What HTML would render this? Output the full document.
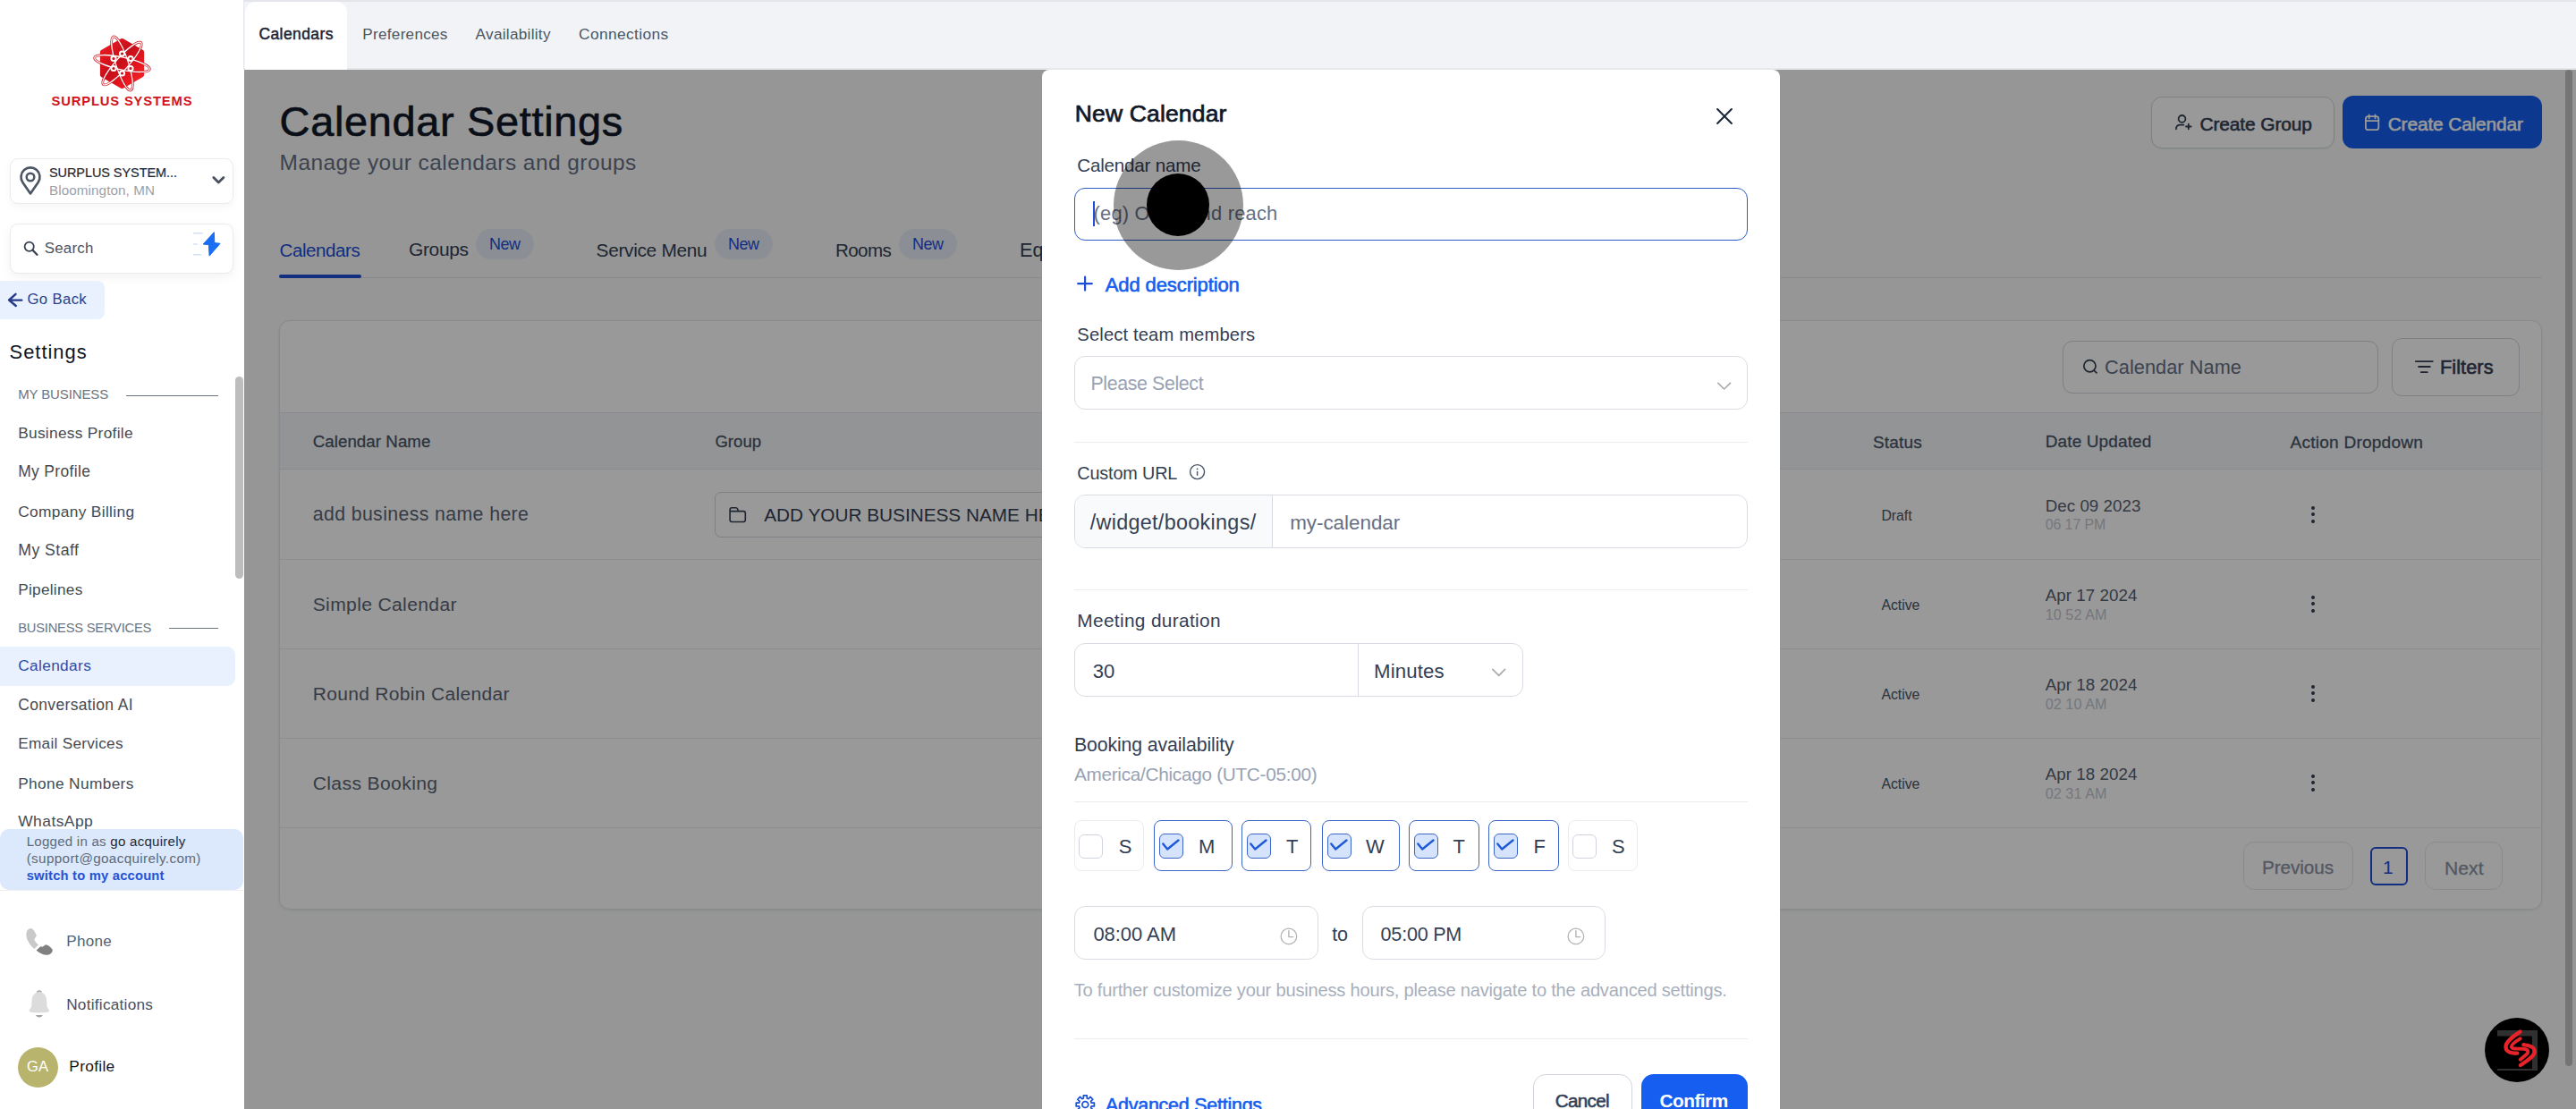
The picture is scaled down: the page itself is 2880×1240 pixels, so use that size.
<!DOCTYPE html>
<html><head><meta charset="utf-8"><style>
html,body{margin:0;padding:0;}
body{width:2880px;height:1240px;overflow:hidden;position:relative;background:#fff;font-family:"Liberation Sans",sans-serif;}
.t{position:absolute;line-height:1;white-space:nowrap;}
.b{position:absolute;}
</style></head><body>
<div class="b" style="left:0px;top:0px;width:272px;height:1240px;z-index:1;background:#fff;"></div>
<div class="b" style="left:272px;top:0px;width:1px;height:78px;z-index:2;background:#e4e7ec;"></div>
<!--LOGO-->
<div class="b" style="left:11px;top:177px;width:250px;height:51px;z-index:1;border:1px solid #e9ebef;border-radius:9px;background:#fff;box-shadow:0 4px 10px rgba(16,24,40,0.04);box-sizing:border-box;"></div>
<div class="b" style="left:11px;top:250px;width:250px;height:56px;z-index:1;border:1px solid #e9ebef;border-radius:9px;background:#fff;box-shadow:0 4px 12px rgba(16,24,40,0.05);box-sizing:border-box;"></div>
<div class="b" style="left:0px;top:314px;width:117px;height:43px;z-index:1;background:#e8f1fd;border-radius:0 8px 8px 0;"></div>
<div class="b" style="left:141px;top:442px;width:103px;height:1px;z-index:1;background:#6b7482;"></div>
<div class="b" style="left:189px;top:702px;width:55px;height:1px;z-index:1;background:#6b7482;"></div>
<div class="b" style="left:0px;top:723px;width:263px;height:44px;z-index:1;background:#e8f1fd;border-radius:0 9px 9px 0;"></div>
<div class="b" style="left:263px;top:421px;width:9px;height:226px;z-index:1;background:#bdbdbd;border-radius:5px;"></div>
<div class="b" style="left:0px;top:927px;width:272px;height:68px;z-index:3;background:#dce8fb;border-radius:10px;"></div>
<div class="b" style="left:0px;top:995px;width:272px;height:1px;z-index:1;background:#eceef1;"></div>
<div class="b" style="left:20px;top:1171px;width:45px;height:45px;z-index:1;background:#b8b46e;border-radius:50%;"></div>
<div class="b" style="left:273px;top:0px;width:2607px;height:78px;z-index:1;background:#f2f3f7;"></div>
<div class="b" style="left:273px;top:0px;width:2607px;height:2px;z-index:1;background:#e3e5ea;"></div>
<div class="b" style="left:273px;top:76px;width:2607px;height:2px;z-index:1;background:#e6e8ec;"></div>
<div class="b" style="left:274px;top:2px;width:114px;height:76px;z-index:1;background:#fff;border-radius:12px 12px 0 0;"></div>
<div class="b" style="left:273px;top:78px;width:2607px;height:1162px;z-index:1;background:#f8fbf9;"></div>
<div class="b" style="left:2405px;top:108px;width:205px;height:58px;z-index:1;border:1px solid #d0d5dd;border-radius:12px;background:#fff;box-sizing:border-box;box-shadow:0 1px 2px rgba(16,24,40,0.05);"></div>
<div class="b" style="left:2619px;top:107px;width:223px;height:59px;z-index:1;background:#155eef;border-radius:12px;"></div>
<div class="b" style="left:312px;top:307px;width:92px;height:4px;z-index:2;background:#1d4ed8;border-radius:2px;"></div>
<div class="b" style="left:312px;top:310px;width:2530px;height:1px;z-index:1;background:#e4e7ec;"></div>
<div class="b" style="left:532px;top:256px;width:65px;height:34px;z-index:1;background:#e8edf8;border-radius:17px;"></div>
<div class="b" style="left:799px;top:256px;width:65px;height:34px;z-index:1;background:#e8edf8;border-radius:17px;"></div>
<div class="b" style="left:1005px;top:256px;width:65px;height:34px;z-index:1;background:#e8edf8;border-radius:17px;"></div>
<div class="b" style="left:312px;top:358px;width:2530px;height:659px;z-index:1;background:#fff;border:1px solid #e4e7ec;border-radius:12px;box-sizing:border-box;box-shadow:0 1px 3px rgba(16,24,40,0.08);"></div>
<div class="b" style="left:313px;top:461px;width:2528px;height:64px;z-index:1;background:#f6f7f9;border-top:1px solid #e4e7ec;border-bottom:1px solid #e4e7ec;box-sizing:border-box;"></div>
<div class="b" style="left:2306px;top:381px;width:353px;height:59px;z-index:1;border:1px solid #d0d5dd;border-radius:11px;background:#fff;box-sizing:border-box;"></div>
<div class="b" style="left:2674px;top:378px;width:143px;height:65px;z-index:1;border:1px solid #d0d5dd;border-radius:11px;background:#fff;box-sizing:border-box;"></div>
<div class="b" style="left:313px;top:625px;width:2528px;height:1px;z-index:1;background:#e9ebef;"></div>
<div class="b" style="left:2584px;top:565.5px;width:4.199999999999818px;height:4.2000000000000455px;z-index:1;background:#344054;border-radius:50%;"></div>
<div class="b" style="left:2584px;top:573.0px;width:4.199999999999818px;height:4.2000000000000455px;z-index:1;background:#344054;border-radius:50%;"></div>
<div class="b" style="left:2584px;top:580.5px;width:4.199999999999818px;height:4.2000000000000455px;z-index:1;background:#344054;border-radius:50%;"></div>
<div class="b" style="left:313px;top:725px;width:2528px;height:1px;z-index:1;background:#e9ebef;"></div>
<div class="b" style="left:2584px;top:665.5px;width:4.199999999999818px;height:4.2000000000000455px;z-index:1;background:#344054;border-radius:50%;"></div>
<div class="b" style="left:2584px;top:673.0px;width:4.199999999999818px;height:4.2000000000000455px;z-index:1;background:#344054;border-radius:50%;"></div>
<div class="b" style="left:2584px;top:680.5px;width:4.199999999999818px;height:4.2000000000000455px;z-index:1;background:#344054;border-radius:50%;"></div>
<div class="b" style="left:313px;top:825px;width:2528px;height:1px;z-index:1;background:#e9ebef;"></div>
<div class="b" style="left:2584px;top:765.5px;width:4.199999999999818px;height:4.2000000000000455px;z-index:1;background:#344054;border-radius:50%;"></div>
<div class="b" style="left:2584px;top:773.0px;width:4.199999999999818px;height:4.2000000000000455px;z-index:1;background:#344054;border-radius:50%;"></div>
<div class="b" style="left:2584px;top:780.5px;width:4.199999999999818px;height:4.2000000000000455px;z-index:1;background:#344054;border-radius:50%;"></div>
<div class="b" style="left:313px;top:925px;width:2528px;height:1px;z-index:1;background:#e9ebef;"></div>
<div class="b" style="left:2584px;top:865.5px;width:4.199999999999818px;height:4.2000000000000455px;z-index:1;background:#344054;border-radius:50%;"></div>
<div class="b" style="left:2584px;top:873.0px;width:4.199999999999818px;height:4.2000000000000455px;z-index:1;background:#344054;border-radius:50%;"></div>
<div class="b" style="left:2584px;top:880.5px;width:4.199999999999818px;height:4.2000000000000455px;z-index:1;background:#344054;border-radius:50%;"></div>
<div class="b" style="left:799px;top:550px;width:401px;height:51px;z-index:1;border:1px solid #d0d5dd;border-radius:7px;background:#fff;box-sizing:border-box;"></div>
<div class="b" style="left:2508px;top:941px;width:123px;height:54px;z-index:1;border:1px solid #e4e7ec;border-radius:12px;background:#fff;box-sizing:border-box;"></div>
<div class="b" style="left:2650px;top:947px;width:42px;height:43px;z-index:1;border:2px solid #1d4ed8;border-radius:6px;box-sizing:border-box;"></div>
<div class="b" style="left:2711px;top:941px;width:87px;height:54px;z-index:1;border:1px solid #e4e7ec;border-radius:12px;background:#fff;box-sizing:border-box;"></div>
<div class="b" style="left:2868px;top:78px;width:8px;height:1114px;z-index:2;background:#c4c4c4;border-radius:4px;"></div>
<div class="b" style="left:273px;top:78px;width:2607px;height:1162px;z-index:10;background:rgba(0,0,0,0.4);"></div>
<div class="b" style="left:1165px;top:78px;width:825px;height:1182px;z-index:20;background:#fff;border-radius:8px 8px 0 0;"></div>
<div class="b" style="left:1201px;top:210px;width:753px;height:59px;z-index:21;border:1.5px solid #2d5cc8;border-radius:12px;box-sizing:border-box;"></div>
<div class="b" style="left:1222px;top:225px;width:2px;height:28px;z-index:22;background:#1d4ed8;"></div>
<div class="b" style="left:1201px;top:398px;width:753px;height:60px;z-index:21;border:1px solid #d9dde3;border-radius:12px;box-sizing:border-box;"></div>
<div class="b" style="left:1201px;top:494px;width:753px;height:1px;z-index:21;background:#eaecf0;"></div>
<div class="b" style="left:1201px;top:553px;width:753px;height:60px;z-index:21;border:1px solid #d9dde3;border-radius:12px;box-sizing:border-box;overflow:hidden;"><div style="position:absolute;left:0;top:0;width:220px;height:100%;background:#f9fafb;border-right:1px solid #d9dde3;"></div></div>
<div class="b" style="left:1201px;top:659px;width:753px;height:1px;z-index:21;background:#eaecf0;"></div>
<div class="b" style="left:1201px;top:719px;width:502px;height:60px;z-index:21;border:1px solid #d9dde3;border-radius:12px;box-sizing:border-box;"><div style="position:absolute;left:316px;top:0;width:1px;height:100%;background:#d9dde3;"></div></div>
<div class="b" style="left:1201px;top:896px;width:753px;height:1px;z-index:21;background:#eaecf0;"></div>
<div class="b" style="left:1201px;top:917px;width:78px;height:57px;z-index:21;border:1px solid #eaecf0;border-radius:8px;box-sizing:border-box;"></div>
<div class="b" style="left:1206px;top:933px;width:27px;height:27px;z-index:22;border:1px solid #d0d5dd;border-radius:6px;box-sizing:border-box;"></div>
<div class="b" style="left:1290px;top:917px;width:88px;height:57px;z-index:21;border:1.4px solid #3d66c8;border-radius:8px;box-sizing:border-box;"></div>
<div class="b" style="left:1296px;top:932px;width:27px;height:28px;z-index:22;border:1.4px solid #3d66c8;background:#d6e3fc;border-radius:6px;box-sizing:border-box;"></div>
<svg class="b" style="left:1296px;top:932px;z-index:23;overflow:visible" width="27" height="28" viewBox="0 0 27 28"><path d="M4.3 11.5 L9.2 17.5 L21.5 7.5" fill="none" stroke="#1f5ad6" stroke-width="2.4" stroke-linecap="round" stroke-linejoin="round"/></svg>
<div class="b" style="left:1388px;top:917px;width:78px;height:57px;z-index:21;border:1.4px solid #3d66c8;border-radius:8px;box-sizing:border-box;"></div>
<div class="b" style="left:1394px;top:932px;width:27px;height:28px;z-index:22;border:1.4px solid #3d66c8;background:#d6e3fc;border-radius:6px;box-sizing:border-box;"></div>
<svg class="b" style="left:1394px;top:932px;z-index:23;overflow:visible" width="27" height="28" viewBox="0 0 27 28"><path d="M4.3 11.5 L9.2 17.5 L21.5 7.5" fill="none" stroke="#1f5ad6" stroke-width="2.4" stroke-linecap="round" stroke-linejoin="round"/></svg>
<div class="b" style="left:1478px;top:917px;width:87px;height:57px;z-index:21;border:1.4px solid #3d66c8;border-radius:8px;box-sizing:border-box;"></div>
<div class="b" style="left:1484px;top:932px;width:27px;height:28px;z-index:22;border:1.4px solid #3d66c8;background:#d6e3fc;border-radius:6px;box-sizing:border-box;"></div>
<svg class="b" style="left:1484px;top:932px;z-index:23;overflow:visible" width="27" height="28" viewBox="0 0 27 28"><path d="M4.3 11.5 L9.2 17.5 L21.5 7.5" fill="none" stroke="#1f5ad6" stroke-width="2.4" stroke-linecap="round" stroke-linejoin="round"/></svg>
<div class="b" style="left:1575px;top:917px;width:79px;height:57px;z-index:21;border:1.4px solid #3d66c8;border-radius:8px;box-sizing:border-box;"></div>
<div class="b" style="left:1581px;top:932px;width:27px;height:28px;z-index:22;border:1.4px solid #3d66c8;background:#d6e3fc;border-radius:6px;box-sizing:border-box;"></div>
<svg class="b" style="left:1581px;top:932px;z-index:23;overflow:visible" width="27" height="28" viewBox="0 0 27 28"><path d="M4.3 11.5 L9.2 17.5 L21.5 7.5" fill="none" stroke="#1f5ad6" stroke-width="2.4" stroke-linecap="round" stroke-linejoin="round"/></svg>
<div class="b" style="left:1664px;top:917px;width:79px;height:57px;z-index:21;border:1.4px solid #3d66c8;border-radius:8px;box-sizing:border-box;"></div>
<div class="b" style="left:1670px;top:932px;width:27px;height:28px;z-index:22;border:1.4px solid #3d66c8;background:#d6e3fc;border-radius:6px;box-sizing:border-box;"></div>
<svg class="b" style="left:1670px;top:932px;z-index:23;overflow:visible" width="27" height="28" viewBox="0 0 27 28"><path d="M4.3 11.5 L9.2 17.5 L21.5 7.5" fill="none" stroke="#1f5ad6" stroke-width="2.4" stroke-linecap="round" stroke-linejoin="round"/></svg>
<div class="b" style="left:1753px;top:917px;width:78px;height:57px;z-index:21;border:1px solid #eaecf0;border-radius:8px;box-sizing:border-box;"></div>
<div class="b" style="left:1758px;top:933px;width:27px;height:27px;z-index:22;border:1px solid #d0d5dd;border-radius:6px;box-sizing:border-box;"></div>
<div class="b" style="left:1201px;top:1013px;width:273px;height:60px;z-index:21;border:1px solid #d9dde3;border-radius:12px;box-sizing:border-box;"></div>
<div class="b" style="left:1523px;top:1013px;width:272px;height:60px;z-index:21;border:1px solid #d9dde3;border-radius:12px;box-sizing:border-box;"></div>
<div class="b" style="left:1201px;top:1161px;width:753px;height:1px;z-index:21;background:#eaecf0;"></div>
<div class="b" style="left:1714px;top:1201px;width:111px;height:59px;z-index:21;border:1px solid #d0d5dd;border-radius:14px;box-sizing:border-box;background:#fff;"></div>
<div class="b" style="left:1835px;top:1201px;width:119px;height:59px;z-index:21;background:#155eef;border-radius:14px;"></div>
<svg class="b" style="left:0px;top:0px;z-index:2;overflow:visible" width="272" height="130" viewBox="0 0 272 130"><defs><linearGradient id="lg" x1="0" y1="0" x2="1" y2="1"><stop offset="0" stop-color="#f01c24"/><stop offset="0.45" stop-color="#c40f19"/><stop offset="0.7" stop-color="#e6161f"/><stop offset="1" stop-color="#f5262c"/></linearGradient></defs><polygon points="136.5,45.5 158.6,58.2 158.6,83.8 136.5,96.5 114.4,83.8 114.4,58.2" fill="url(#lg)" stroke="url(#lg)" stroke-width="5" stroke-linejoin="round"/><ellipse cx="136.5" cy="71.0" rx="31.5" ry="7" transform="rotate(12 136.5 71.0)" fill="none" stroke="#d0121b" stroke-width="2.8"/><ellipse cx="136.5" cy="71.0" rx="31.5" ry="7" transform="rotate(72 136.5 71.0)" fill="none" stroke="#d0121b" stroke-width="2.8"/><ellipse cx="136.5" cy="71.0" rx="31.5" ry="7" transform="rotate(132 136.5 71.0)" fill="none" stroke="#d0121b" stroke-width="2.8"/><ellipse cx="136.5" cy="71.0" rx="31.5" ry="7" transform="rotate(12 136.5 71.0)" fill="none" stroke="#fff" stroke-width="1.3"/><ellipse cx="136.5" cy="71.0" rx="31.5" ry="7" transform="rotate(72 136.5 71.0)" fill="none" stroke="#fff" stroke-width="1.3"/><ellipse cx="136.5" cy="71.0" rx="31.5" ry="7" transform="rotate(132 136.5 71.0)" fill="none" stroke="#fff" stroke-width="1.3"/><circle cx="136.5" cy="60.0" r="2.6" fill="#c8101a" stroke="#fff" stroke-width="2"/><circle cx="146.0" cy="65.5" r="2.6" fill="#c8101a" stroke="#fff" stroke-width="2"/><circle cx="146.0" cy="76.5" r="2.6" fill="#c8101a" stroke="#fff" stroke-width="2"/><circle cx="136.5" cy="82.0" r="2.6" fill="#c8101a" stroke="#fff" stroke-width="2"/><circle cx="127.0" cy="76.5" r="2.6" fill="#c8101a" stroke="#fff" stroke-width="2"/><circle cx="127.0" cy="65.5" r="2.6" fill="#c8101a" stroke="#fff" stroke-width="2"/></svg>
<svg class="b" style="left:20px;top:185px;z-index:2;overflow:visible" width="28" height="34" viewBox="0 0 28 34"><path d="M14 31.5 L5.4 18.9 A10.5 10.5 0 1 1 22.6 18.9 Z" fill="none" stroke="#4b5563" stroke-width="2.6" stroke-linejoin="round"/><circle cx="14" cy="13" r="4.3" fill="none" stroke="#4b5563" stroke-width="2.5"/></svg>
<svg class="b" style="left:236px;top:196px;z-index:2;overflow:visible" width="16" height="12" viewBox="0 0 16 12"><path d="M2.8 2.5 L8.3 8 L13.9 2.5" fill="none" stroke="#4b5060" stroke-width="2.8" stroke-linecap="round" stroke-linejoin="round"/></svg>
<svg class="b" style="left:26px;top:268px;z-index:2;overflow:visible" width="20" height="20" viewBox="0 0 20 20"><circle cx="6.7" cy="7.7" r="5.1" fill="none" stroke="#374151" stroke-width="1.8"/><path d="M10.6 11.7 L15.4 16.8" stroke="#374151" stroke-width="2.3" stroke-linecap="round"/></svg>
<svg class="b" style="left:210px;top:250px;z-index:2;overflow:visible" width="40" height="40" viewBox="0 0 40 40"><path d="M29.3 9.7 L17.1 23 L23.4 23.7 L24.1 36.1 L36.1 22.3 L29.8 21.6 Z" fill="#1b6ef3" stroke="#1b6ef3" stroke-width="1" stroke-linejoin="round"/><path d="M6.1 10.8 H16.9 M6.1 23 H10.8 M6.1 34.7 H15.3" stroke="#d5e0f6" stroke-width="1.6"/></svg>
<svg class="b" style="left:4px;top:322px;z-index:2;overflow:visible" width="30" height="30" viewBox="0 0 30 30"><path d="M13.5 6.8 L6.1 13.5 L13.8 20 M6.5 13.6 H20.3" fill="none" stroke="#263a8c" stroke-width="2.4" stroke-linecap="round" stroke-linejoin="round"/></svg>
<svg class="b" style="left:24px;top:1032px;z-index:2;overflow:visible" width="40" height="40" viewBox="0 0 40 40"><g transform="scale(0.0361)"><path d="M280 165 C200 170 140 260 150 380 C160 520 250 680 400 800 L525 680 C450 610 400 550 400 500 L470 390 C420 280 360 160 280 165 Z" fill="#c9c9c9"/><path d="M460 845 L590 725 L650 740 L750 670 C830 680 920 760 965 830 C960 930 880 990 760 990 C650 985 540 920 460 845 Z" fill="#808080"/></g></svg>
<svg class="b" style="left:24px;top:1102px;z-index:2;overflow:visible" width="40" height="40" viewBox="0 0 40 40"><g transform="scale(0.0361)"><path d="M550 170 C490 170 460 200 470 215 C390 250 330 320 320 450 L310 650 C300 700 240 730 240 780 C240 820 300 840 550 840 C800 840 860 820 860 780 C860 730 800 700 790 650 L780 450 C770 320 710 250 630 215 C640 200 610 170 550 170 Z" fill="#dcdcdc"/><path d="M480 200 C520 165 580 165 620 200" fill="none" stroke="#a9a9a9" stroke-width="40"/><path d="M440 915 L660 915 C640 960 600 985 550 985 C500 985 460 960 440 915 Z" fill="#a3a3a3"/></g></svg>
<svg class="b" style="left:2425px;top:120px;z-index:2;overflow:visible" width="40" height="35" viewBox="0 0 40 35"><circle cx="14.5" cy="12.9" r="3.9" fill="none" stroke="#344054" stroke-width="1.8"/><path d="M7.9 24.3 C7.9 21.5 9.5 19.6 12.5 19.6 H16.4 M21.8 18.7 V24.3 M19 21.5 H24.6" fill="none" stroke="#344054" stroke-width="1.8" stroke-linecap="round"/></svg>
<svg class="b" style="left:2635px;top:120px;z-index:2;overflow:visible" width="35" height="35" viewBox="0 0 35 35"><rect x="9.9" y="10.1" width="14.4" height="15.1" rx="2.8" fill="none" stroke="#fff" stroke-width="1.8"/><path d="M9.9 15.1 H24.3 M13.7 8.4 V12.3 M20.5 8.4 V12.3" stroke="#fff" stroke-width="1.8" stroke-linecap="round"/></svg>
<svg class="b" style="left:2320px;top:395px;z-index:2;overflow:visible" width="35" height="30" viewBox="0 0 35 30"><circle cx="16.4" cy="14.2" r="6.6" fill="none" stroke="#344054" stroke-width="1.7"/><path d="M21.3 19.3 L24 21.9" stroke="#344054" stroke-width="1.7" stroke-linecap="round"/></svg>
<svg class="b" style="left:2693px;top:395px;z-index:2;overflow:visible" width="35" height="30" viewBox="0 0 35 30"><path d="M7.8 9.1 H26.8 M11 15 H23.8 M13.8 21.2 H20.7" stroke="#344054" stroke-width="1.8" stroke-linecap="round"/></svg>
<svg class="b" style="left:808px;top:560px;z-index:2;overflow:visible" width="35" height="30" viewBox="0 0 35 30"><path d="M8.1 21.3 V10 C8.1 8.8 9 7.8 10.2 7.8 H14.8 C15.8 7.8 16.3 8.5 16.8 9.4 L17.3 11.6 H23.2 C24.4 11.6 25.3 12.5 25.3 13.7 V21.3 C25.3 22.5 24.4 23.5 23.2 23.5 H10.2 C9 23.5 8.1 22.5 8.1 21.3 Z M8.1 11.6 H17.3" fill="none" stroke="#344054" stroke-width="1.6" stroke-linejoin="round"/></svg>
<svg class="b" style="left:1910px;top:112px;z-index:22;overflow:visible" width="35" height="35" viewBox="0 0 35 35"><path d="M10.1 10.1 L25.9 25.9 M25.9 10.1 L10.1 25.9" stroke="#1d2939" stroke-width="2.1" stroke-linecap="round"/></svg>
<svg class="b" style="left:1200px;top:300px;z-index:22;overflow:visible" width="30" height="35" viewBox="0 0 30 35"><path d="M13.1 9.5 V24.6 M5.2 17.2 H20.8" stroke="#1a4fd6" stroke-width="2.2" stroke-linecap="round"/></svg>
<svg class="b" style="left:1910px;top:415px;z-index:22;overflow:visible" width="35" height="30" viewBox="0 0 35 30"><path d="M10.7 13.3 L17.6 20 L24.5 13.4" fill="none" stroke="#a8a8a8" stroke-width="1.6" stroke-linecap="round" stroke-linejoin="round"/></svg>
<svg class="b" style="left:1320px;top:512px;z-index:22;overflow:visible" width="35" height="33" viewBox="0 0 35 33"><circle cx="18.6" cy="15.6" r="8" fill="none" stroke="#475467" stroke-width="1.4"/><circle cx="18.6" cy="12.4" r="0.9" fill="#475467"/><path d="M18.6 15.5 V19.3" stroke="#475467" stroke-width="1.4" stroke-linecap="round"/></svg>
<svg class="b" style="left:1660px;top:740px;z-index:22;overflow:visible" width="30" height="25" viewBox="0 0 30 25"><path d="M8.7 8.4 L15.7 15.4 L22.6 8.4" fill="none" stroke="#a8a8a8" stroke-width="1.6" stroke-linecap="round" stroke-linejoin="round"/></svg>
<svg class="b" style="left:1425px;top:1028px;z-index:22;overflow:visible" width="35" height="35" viewBox="0 0 35 35"><circle cx="15.9" cy="18.9" r="8.8" fill="none" stroke="#b4b4b4" stroke-width="1.3"/><path d="M15.9 12.6 V19.6 H20.7" fill="none" stroke="#b4b4b4" stroke-width="1.4" stroke-linecap="round" stroke-linejoin="round"/></svg>
<svg class="b" style="left:1746px;top:1028px;z-index:22;overflow:visible" width="35" height="35" viewBox="0 0 35 35"><circle cx="15.9" cy="18.9" r="8.8" fill="none" stroke="#b4b4b4" stroke-width="1.3"/><path d="M15.9 12.6 V19.6 H20.7" fill="none" stroke="#b4b4b4" stroke-width="1.4" stroke-linecap="round" stroke-linejoin="round"/></svg>
<svg class="b" style="left:1195px;top:1215px;z-index:22;overflow:visible" width="40" height="40" viewBox="0 0 40 40"><polygon points="16.33,9.89 20.27,9.89 20.22,13.06 21.85,13.73 24.06,11.46 26.84,14.24 24.57,16.45 25.24,18.08 28.41,18.03 28.41,21.97 25.24,21.92 24.57,23.55 26.84,25.76 24.06,28.54 21.85,26.27 20.22,26.94 20.27,30.11 16.33,30.11 16.38,26.94 14.75,26.27 12.54,28.54 9.76,25.76 12.03,23.55 11.36,21.92 8.19,21.97 8.19,18.03 11.36,18.08 12.03,16.45 9.76,14.24 12.54,11.46 14.75,13.73 16.38,13.06" fill="none" stroke="#1a4fd6" stroke-width="1.7" stroke-linejoin="round"/><circle cx="18.3" cy="20" r="3.4" fill="none" stroke="#1a4fd6" stroke-width="1.7"/></svg>
<svg class="b" style="left:2778px;top:1138px;z-index:30;overflow:visible" width="72" height="72" viewBox="0 0 72 72"><circle cx="36" cy="36" r="36" fill="#000"/><path d="M14 14 H59 V59 H14" fill="none" stroke="#2e2e2e" stroke-width="0"/><rect x="14" y="14" width="45" height="6.5" fill="#303030"/><rect x="53" y="14" width="6" height="45" fill="#303030"/><rect x="14" y="57" width="45" height="2" fill="#303030"/><g transform="translate(12 12) scale(0.04509)" fill="none" stroke="#e8232a" stroke-linecap="round"><path d="M610 80 C400 220 260 330 255 450 C250 560 350 615 540 615" stroke-width="95"/><path d="M610 250 C480 330 390 400 395 450 C400 500 470 500 560 500 L700 505 C820 515 830 590 760 650 L615 770" stroke-width="85"/><path d="M695 400 C870 410 970 480 970 570 C970 670 850 760 620 910" stroke-width="95"/></g></svg>
<div class="b" style="left:1245px;top:157px;width:145px;height:145px;border-radius:50%;background:rgba(0,0,0,0.4);z-index:40;"></div>
<div class="b" style="left:1282px;top:194px;width:70px;height:70px;border-radius:50%;background:#000;z-index:41;"></div>
<span class="t" id="t0" style="left:55.0px;top:186.47px;font-size:14.45px;color:#1f2733;font-weight:400;letter-spacing:-0.042px;z-index:1;-webkit-text-stroke:0.20px #1f2733;">SURPLUS SYSTEM...</span>
<span class="t" id="t1" style="left:55.0px;top:205.12px;font-size:15.21px;color:#9aa1ab;font-weight:400;letter-spacing:0.099px;z-index:1;">Bloomington, MN</span>
<span class="t" id="t2" style="left:49.7px;top:270.03px;font-size:16.86px;color:#4b5360;font-weight:400;letter-spacing:0.257px;z-index:1;">Search</span>
<span class="t" id="t3" style="left:30.5px;top:326.86px;font-size:16.70px;color:#2a3f8f;font-weight:400;letter-spacing:0.367px;z-index:1;">Go Back</span>
<span class="t" id="t4" style="left:10.6px;top:383.06px;font-size:21.90px;color:#0f141c;font-weight:400;letter-spacing:0.988px;z-index:1;">Settings</span>
<span class="t" id="t5" style="left:20.2px;top:433.32px;font-size:14.98px;color:#6b7482;font-weight:400;letter-spacing:-0.105px;z-index:1;">MY BUSINESS</span>
<span class="t" id="t6" style="left:20.2px;top:475.67px;font-size:17.29px;color:#454a52;font-weight:400;letter-spacing:0.295px;z-index:1;">Business Profile</span>
<span class="t" id="t7" style="left:20.2px;top:519.23px;font-size:17.45px;color:#454a52;font-weight:400;letter-spacing:0.363px;z-index:1;">My Profile</span>
<span class="t" id="t8" style="left:20.2px;top:563.63px;font-size:17.33px;color:#454a52;font-weight:400;letter-spacing:0.334px;z-index:1;">Company Billing</span>
<span class="t" id="t9" style="left:20.2px;top:607.03px;font-size:17.68px;color:#454a52;font-weight:400;letter-spacing:0.473px;z-index:1;">My Staff</span>
<span class="t" id="t10" style="left:20.2px;top:650.83px;font-size:17.21px;color:#454a52;font-weight:400;letter-spacing:0.286px;z-index:1;">Pipelines</span>
<span class="t" id="t11" style="left:20.2px;top:694.55px;font-size:14.71px;color:#6b7482;font-weight:400;letter-spacing:-0.212px;z-index:1;">BUSINESS SERVICES</span>
<span class="t" id="t12" style="left:20.2px;top:735.66px;font-size:17.29px;color:#2b4ea5;font-weight:400;letter-spacing:0.353px;z-index:1;">Calendars</span>
<span class="t" id="t13" style="left:20.2px;top:780.22px;font-size:17.46px;color:#454a52;font-weight:400;letter-spacing:0.374px;z-index:1;">Conversation AI</span>
<span class="t" id="t14" style="left:20.2px;top:823.43px;font-size:17.21px;color:#454a52;font-weight:400;letter-spacing:0.284px;z-index:1;">Email Services</span>
<span class="t" id="t15" style="left:20.2px;top:868.37px;font-size:17.28px;color:#454a52;font-weight:400;letter-spacing:0.368px;z-index:1;">Phone Numbers</span>
<span class="t" id="t16" style="left:20.2px;top:910.06px;font-size:17.42px;color:#454a52;font-weight:400;letter-spacing:0.469px;z-index:1;">WhatsApp</span>
<span class="t" id="t17" style="left:29.7px;top:933.06px;font-size:15.05px;color:#1f2937;font-weight:400;letter-spacing:0.253px;z-index:4;"><span style="color:#5d6b7a">Logged in as </span>go acquirely</span>
<span class="t" id="t18" style="left:29.7px;top:952.09px;font-size:15.25px;color:#5d6b7a;font-weight:400;letter-spacing:0.344px;z-index:4;">(support@goacquirely.com)</span>
<span class="t" id="t19" style="left:29.7px;top:971.98px;font-size:14.79px;color:#2553d5;font-weight:700;letter-spacing:0.185px;z-index:4;">switch to my account</span>
<span class="t" id="t20" style="left:74.2px;top:1044.46px;font-size:17.06px;color:#4f6378;font-weight:400;letter-spacing:0.326px;z-index:1;">Phone</span>
<span class="t" id="t21" style="left:74.2px;top:1114.83px;font-size:17.22px;color:#4a4f57;font-weight:400;letter-spacing:0.257px;z-index:1;">Notifications</span>
<span class="t" id="t22" style="left:30.0px;top:1185.01px;font-size:16.53px;color:#ffffff;font-weight:400;letter-spacing:0.125px;z-index:1;">GA</span>
<span class="t" id="t23" style="left:77.3px;top:1184.04px;font-size:17.32px;color:#111318;font-weight:400;letter-spacing:0.304px;z-index:1;">Profile</span>
<span class="t" id="t24" style="left:289.4px;top:30.20px;font-size:17.48px;color:#1e2433;font-weight:400;letter-spacing:0.432px;z-index:1;-webkit-text-stroke:0.49px #1e2433;">Calendars</span>
<span class="t" id="t25" style="left:405.3px;top:29.84px;font-size:17.08px;color:#4b5563;font-weight:400;letter-spacing:0.303px;z-index:1;">Preferences</span>
<span class="t" id="t26" style="left:531.6px;top:29.75px;font-size:17.19px;color:#4b5563;font-weight:400;letter-spacing:0.274px;z-index:1;">Availability</span>
<span class="t" id="t27" style="left:647.0px;top:29.66px;font-size:17.29px;color:#4b5563;font-weight:400;letter-spacing:0.398px;z-index:1;">Connections</span>
<span class="t" id="t28" style="left:312.6px;top:113.02px;font-size:46.87px;color:#101828;font-weight:400;letter-spacing:0.699px;z-index:1;-webkit-text-stroke:0.66px #101828;">Calendar Settings</span>
<span class="t" id="t29" style="left:312.6px;top:169.71px;font-size:24.44px;color:#667085;font-weight:400;letter-spacing:0.459px;z-index:1;">Manage your calendars and groups</span>
<span class="t" id="t30" style="left:2459.4px;top:128.80px;font-size:20.90px;color:#344054;font-weight:400;letter-spacing:-0.094px;z-index:1;-webkit-text-stroke:0.59px #344054;">Create Group</span>
<span class="t" id="t31" style="left:2669.7px;top:128.86px;font-size:20.84px;color:#ffffff;font-weight:400;letter-spacing:-0.112px;z-index:1;-webkit-text-stroke:0.58px #ffffff;">Create Calendar</span>
<span class="t" id="t32" style="left:312.6px;top:269.82px;font-size:20.53px;color:#1d4ed8;font-weight:400;letter-spacing:-0.421px;z-index:1;">Calendars</span>
<span class="t" id="t33" style="left:457.0px;top:269.48px;font-size:20.93px;color:#344054;font-weight:400;letter-spacing:-0.324px;z-index:1;">Groups</span>
<span class="t" id="t34" style="left:666.6px;top:269.56px;font-size:20.84px;color:#344054;font-weight:400;letter-spacing:-0.306px;z-index:1;">Service Menu</span>
<span class="t" id="t35" style="left:933.9px;top:269.79px;font-size:20.57px;color:#344054;font-weight:400;letter-spacing:-0.565px;z-index:1;">Rooms</span>
<span class="t" id="t36" style="left:1140.0px;top:268.84px;font-size:21.69px;color:#344054;font-weight:400;letter-spacing:0.000px;z-index:1;">Equipments</span>
<span class="t" id="t37" style="left:547.0px;top:265.05px;font-size:17.90px;color:#1d4ed8;font-weight:400;letter-spacing:-0.402px;z-index:1;">New</span>
<span class="t" id="t38" style="left:814.0px;top:265.05px;font-size:17.90px;color:#1d4ed8;font-weight:400;letter-spacing:-0.402px;z-index:1;">New</span>
<span class="t" id="t39" style="left:1020.0px;top:265.05px;font-size:17.90px;color:#1d4ed8;font-weight:400;letter-spacing:-0.402px;z-index:1;">New</span>
<span class="t" id="t40" style="left:2353.0px;top:399.91px;font-size:21.72px;color:#667085;font-weight:400;letter-spacing:0.063px;z-index:1;">Calendar Name</span>
<span class="t" id="t41" style="left:2728.0px;top:400.09px;font-size:21.75px;color:#344054;font-weight:400;letter-spacing:0.056px;z-index:1;-webkit-text-stroke:0.61px #344054;">Filters</span>
<span class="t" id="t42" style="left:349.7px;top:484.88px;font-size:18.69px;color:#475467;font-weight:400;letter-spacing:0.067px;z-index:1;-webkit-text-stroke:0.26px #475467;">Calendar Name</span>
<span class="t" id="t43" style="left:799.4px;top:484.98px;font-size:18.57px;color:#475467;font-weight:400;letter-spacing:0.023px;z-index:1;-webkit-text-stroke:0.26px #475467;">Group</span>
<span class="t" id="t44" style="left:2093.9px;top:484.62px;font-size:19.00px;color:#475467;font-weight:400;letter-spacing:0.186px;z-index:1;-webkit-text-stroke:0.27px #475467;">Status</span>
<span class="t" id="t45" style="left:2286.7px;top:484.66px;font-size:18.95px;color:#475467;font-weight:400;letter-spacing:0.163px;z-index:1;-webkit-text-stroke:0.27px #475467;">Date Updated</span>
<span class="t" id="t46" style="left:2560.6px;top:484.54px;font-size:19.09px;color:#475467;font-weight:400;letter-spacing:0.214px;z-index:1;-webkit-text-stroke:0.27px #475467;">Action Dropdown</span>
<span class="t" id="t47" style="left:349.7px;top:564.82px;font-size:21.24px;color:#5a6475;font-weight:400;letter-spacing:0.412px;z-index:1;">add business name here</span>
<span class="t" id="t48" style="left:2103.4px;top:569.03px;font-size:15.80px;color:#475467;font-weight:400;letter-spacing:-0.027px;z-index:1;">Draft</span>
<span class="t" id="t49" style="left:2286.7px;top:556.67px;font-size:18.70px;color:#586170;font-weight:400;letter-spacing:0.068px;z-index:1;">Dec 09 2023</span>
<span class="t" id="t50" style="left:2286.7px;top:578.91px;font-size:15.82px;color:#c3c8d0;font-weight:400;letter-spacing:-0.022px;z-index:1;">06 17 PM</span>
<span class="t" id="t51" style="left:349.7px;top:664.96px;font-size:21.08px;color:#5a6475;font-weight:400;letter-spacing:0.355px;z-index:1;">Simple Calendar</span>
<span class="t" id="t52" style="left:2103.4px;top:669.02px;font-size:15.81px;color:#475467;font-weight:400;letter-spacing:-0.023px;z-index:1;">Active</span>
<span class="t" id="t53" style="left:2286.7px;top:656.65px;font-size:18.73px;color:#586170;font-weight:400;letter-spacing:0.077px;z-index:1;">Apr 17 2024</span>
<span class="t" id="t54" style="left:2286.7px;top:678.66px;font-size:16.11px;color:#c3c8d0;font-weight:400;letter-spacing:0.097px;z-index:1;">10 52 AM</span>
<span class="t" id="t55" style="left:349.7px;top:765.03px;font-size:20.99px;color:#5a6475;font-weight:400;letter-spacing:0.329px;z-index:1;">Round Robin Calendar</span>
<span class="t" id="t56" style="left:2103.4px;top:769.02px;font-size:15.81px;color:#475467;font-weight:400;letter-spacing:-0.023px;z-index:1;">Active</span>
<span class="t" id="t57" style="left:2286.7px;top:756.65px;font-size:18.73px;color:#586170;font-weight:400;letter-spacing:0.077px;z-index:1;">Apr 18 2024</span>
<span class="t" id="t58" style="left:2286.7px;top:778.66px;font-size:16.11px;color:#c3c8d0;font-weight:400;letter-spacing:0.097px;z-index:1;">02 10 AM</span>
<span class="t" id="t59" style="left:349.7px;top:864.93px;font-size:21.11px;color:#5a6475;font-weight:400;letter-spacing:0.370px;z-index:1;">Class Booking</span>
<span class="t" id="t60" style="left:2103.4px;top:869.02px;font-size:15.81px;color:#475467;font-weight:400;letter-spacing:-0.023px;z-index:1;">Active</span>
<span class="t" id="t61" style="left:2286.7px;top:856.65px;font-size:18.73px;color:#586170;font-weight:400;letter-spacing:0.077px;z-index:1;">Apr 18 2024</span>
<span class="t" id="t62" style="left:2286.7px;top:878.66px;font-size:16.11px;color:#c3c8d0;font-weight:400;letter-spacing:0.097px;z-index:1;">02 31 AM</span>
<span class="t" id="t63" style="left:854.2px;top:565.92px;font-size:20.77px;color:#344054;font-weight:400;letter-spacing:0.000px;z-index:1;">ADD YOUR BUSINESS NAME HERE</span>
<span class="t" id="t64" style="left:2529.0px;top:960.08px;font-size:20.70px;color:#8a93a3;font-weight:400;letter-spacing:-0.073px;z-index:1;-webkit-text-stroke:0.29px #8a93a3;">Previous</span>
<span class="t" id="t65" style="left:2664.0px;top:959.91px;font-size:20.90px;color:#1d4ed8;font-weight:400;letter-spacing:0.000px;z-index:1;">1</span>
<span class="t" id="t66" style="left:2733.0px;top:959.75px;font-size:21.08px;color:#8a93a3;font-weight:400;letter-spacing:0.085px;z-index:1;-webkit-text-stroke:0.30px #8a93a3;">Next</span>
<span class="t" id="t67" style="left:1201.7px;top:114.07px;font-size:26.49px;color:#101828;font-weight:400;letter-spacing:0.171px;z-index:21;-webkit-text-stroke:0.74px #101828;">New Calendar</span>
<span class="t" id="t68" style="left:1204.3px;top:175.16px;font-size:20.60px;color:#344054;font-weight:400;letter-spacing:-0.209px;z-index:21;">Calendar name</span>
<span class="t" id="t69" style="left:1222.5px;top:228.22px;font-size:21.84px;color:#667085;font-weight:400;letter-spacing:0.236px;z-index:21;">(eg) Outbound reach</span>
<span class="t" id="t70" style="left:1235.8px;top:308.32px;font-size:22.06px;color:#155eef;font-weight:400;letter-spacing:-0.136px;z-index:21;-webkit-text-stroke:0.62px #155eef;">Add description</span>
<span class="t" id="t71" style="left:1204.3px;top:364.09px;font-size:20.21px;color:#344054;font-weight:400;letter-spacing:0.136px;z-index:21;">Select team members</span>
<span class="t" id="t72" style="left:1219.5px;top:418.83px;font-size:21.35px;color:#98a2b3;font-weight:400;letter-spacing:-0.370px;z-index:21;">Please Select</span>
<span class="t" id="t73" style="left:1204.3px;top:519.50px;font-size:19.84px;color:#344054;font-weight:400;letter-spacing:-0.164px;z-index:21;">Custom URL</span>
<span class="t" id="t74" style="left:1218.7px;top:573.20px;font-size:23.39px;color:#344054;font-weight:400;letter-spacing:0.302px;z-index:22;">/widget/bookings/</span>
<span class="t" id="t75" style="left:1442.2px;top:574.02px;font-size:22.42px;color:#667085;font-weight:400;letter-spacing:-0.025px;z-index:22;">my-calendar</span>
<span class="t" id="t76" style="left:1204.3px;top:684.17px;font-size:20.83px;color:#344054;font-weight:400;letter-spacing:0.341px;z-index:21;">Meeting duration</span>
<span class="t" id="t77" style="left:1221.7px;top:739.93px;font-size:22.05px;color:#344054;font-weight:400;letter-spacing:0.071px;z-index:22;">30</span>
<span class="t" id="t78" style="left:1536.1px;top:739.79px;font-size:22.22px;color:#344054;font-weight:400;letter-spacing:0.102px;z-index:22;">Minutes</span>
<span class="t" id="t79" style="left:1200.9px;top:822.52px;font-size:21.24px;color:#344054;font-weight:400;letter-spacing:-0.093px;z-index:21;">Booking availability</span>
<span class="t" id="t80" style="left:1200.9px;top:855.85px;font-size:20.74px;color:#98a2b3;font-weight:400;letter-spacing:-0.274px;z-index:21;">America/Chicago (UTC-05:00)</span>
<span class="t" id="t81" style="left:1250.7px;top:936.41px;font-size:21.96px;color:#344054;font-weight:400;letter-spacing:0.000px;z-index:22;">S</span>
<span class="t" id="t82" style="left:1340.1px;top:936.41px;font-size:21.96px;color:#344054;font-weight:400;letter-spacing:0.000px;z-index:22;">M</span>
<span class="t" id="t83" style="left:1437.9px;top:936.41px;font-size:21.96px;color:#344054;font-weight:400;letter-spacing:0.000px;z-index:22;">T</span>
<span class="t" id="t84" style="left:1526.9px;top:936.41px;font-size:21.96px;color:#344054;font-weight:400;letter-spacing:0.000px;z-index:22;">W</span>
<span class="t" id="t85" style="left:1624.6px;top:936.41px;font-size:21.96px;color:#344054;font-weight:400;letter-spacing:0.000px;z-index:22;">T</span>
<span class="t" id="t86" style="left:1714.4px;top:936.41px;font-size:21.96px;color:#344054;font-weight:400;letter-spacing:0.000px;z-index:22;">F</span>
<span class="t" id="t87" style="left:1802.1px;top:936.41px;font-size:21.96px;color:#344054;font-weight:400;letter-spacing:0.000px;z-index:22;">S</span>
<span class="t" id="t88" style="left:1222.4px;top:1033.89px;font-size:21.99px;color:#344054;font-weight:400;letter-spacing:-0.040px;z-index:22;">08:00 AM</span>
<span class="t" id="t89" style="left:1489.2px;top:1034.25px;font-size:21.57px;color:#344054;font-weight:400;letter-spacing:-0.285px;z-index:22;">to</span>
<span class="t" id="t90" style="left:1543.6px;top:1034.26px;font-size:21.55px;color:#344054;font-weight:400;letter-spacing:-0.215px;z-index:22;">05:00 PM</span>
<span class="t" id="t91" style="left:1200.7px;top:1096.50px;font-size:20.08px;color:#a7afbc;font-weight:400;letter-spacing:-0.200px;z-index:21;">To further customize your business hours, please navigate to the advanced settings.</span>
<span class="t" id="t92" style="left:1738.7px;top:1221.29px;font-size:20.56px;color:#344054;font-weight:400;letter-spacing:-0.597px;z-index:22;-webkit-text-stroke:0.58px #344054;">Cancel</span>
<span class="t" id="t93" style="left:1855.5px;top:1221.08px;font-size:20.82px;color:#ffffff;font-weight:700;letter-spacing:-0.514px;z-index:22;">Confirm</span>
<span class="t" id="t94" style="left:1236.0px;top:1225.56px;font-size:21.43px;color:#155eef;font-weight:400;letter-spacing:-0.224px;z-index:21;-webkit-text-stroke:0.60px #155eef;">Advanced Settings</span>
<span class="t" id="t95" style="left:57.6px;top:106.46px;font-size:14.81px;color:#d3131c;font-weight:700;letter-spacing:0.815px;z-index:1;">SURPLUS SYSTEMS</span>
</body></html>
